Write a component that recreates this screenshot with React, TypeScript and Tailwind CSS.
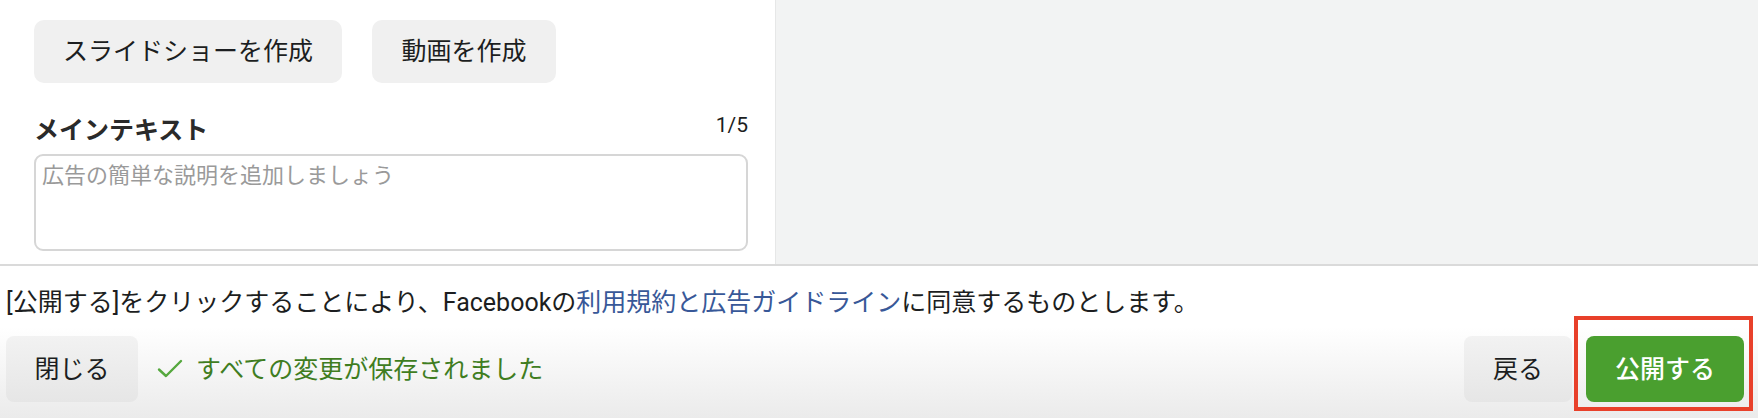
import React from "react";

const FONT = 'font-["Roboto","Noto_Sans_CJK_JP",sans-serif]';

export default function App() {
  return (
    <div
      className={`w-[1758px] h-[418px] flex flex-col overflow-hidden bg-white text-[#1c1e21] ${FONT}`}
      style={{ fontFamily: 'Roboto, "Noto Sans CJK JP", sans-serif' }}
    >
      {/* Top area */}
      <div className="flex h-[264px] shrink-0 overflow-hidden">
        <div className="w-[776px] shrink-0 bg-white border-r border-[#e6e7e7] pl-[34px] pr-[27px] pt-[20px]">
          <div className="flex gap-[30px]">
            <button className="w-[308px] h-[63px] rounded-[10px] bg-[#f0f0f0] text-[25px] leading-none text-[#1c1e21]">
              スライドショーを作成
            </button>
            <button className="w-[184px] h-[63px] rounded-[10px] bg-[#f0f0f0] text-[25px] leading-none text-[#1c1e21]">
              動画を作成
            </button>
          </div>
          <div className="flex items-center justify-between mt-[31px] h-[28px]">
            <span className="text-[25px] font-bold leading-none text-[#2a2a2a] mt-[4px]">メインテキスト</span>
            <span className="text-[21px] leading-none text-[#1c1e21] -mt-[6px]">1/5</span>
          </div>
          <div className="mt-[12px] h-[97px] rounded-[9px] border-2 border-[#d6d6d6] px-[6px] pt-[6px]">
            <span className="text-[22px] leading-[28px] text-[#9a9a9a]">広告の簡単な説明を追加しましょう</span>
          </div>
        </div>
        <div className="flex-1 bg-[#f2f3f3]" />
      </div>

      {/* Footer */}
      <div className="flex-1 border-t-2 border-[#dadada] bg-gradient-to-b from-white from-40% to-[#ebebeb] pt-[22px] pb-[16px] pr-[14px] pl-[6px] flex flex-col">
        <p className="text-[25px] leading-[30px] text-[#1c1e21] whitespace-nowrap">
          [公開する]をクリックすることにより、Facebookの
          <span className="text-[#385898]">利用規約と広告ガイドライン</span>
          に同意するものとします。
        </p>
        <div className="mt-[18px] flex items-center">
          <button className="w-[132px] h-[66px] rounded-[8px] bg-gradient-to-b from-[#f2f2f2] to-[#e6e6e6] text-[25px] leading-none text-[#1c1e21]">
            閉じる
          </button>
          <svg className="ml-[19px] w-[26px] h-[20px]" viewBox="0 0 26 20" fill="none">
            <path d="M2 10.5 L9 17 L24 2" stroke="#55a83e" strokeWidth="2.4" strokeLinecap="round" strokeLinejoin="round" />
          </svg>
          <span className="ml-[13px] text-[25px] leading-none text-[#3f7d1f]">すべての変更が保存されました</span>
          <div className="ml-auto flex items-center gap-[14px]">
            <button className="w-[108px] h-[66px] rounded-[8px] bg-gradient-to-b from-[#f2f2f2] to-[#e6e6e6] text-[25px] leading-none text-[#1c1e21]">
              戻る
            </button>
            <div className="relative">
              <button className="w-[158px] h-[66px] rounded-[8px] bg-[#4a9f2f] text-[25px] font-medium leading-none text-white">
                公開する
              </button>
              <div className="absolute -left-[12px] -top-[20px] -right-[9px] -bottom-[9px] border-4 border-[#e8402a] pointer-events-none" />
            </div>
          </div>
        </div>
      </div>
    </div>
  );
}
